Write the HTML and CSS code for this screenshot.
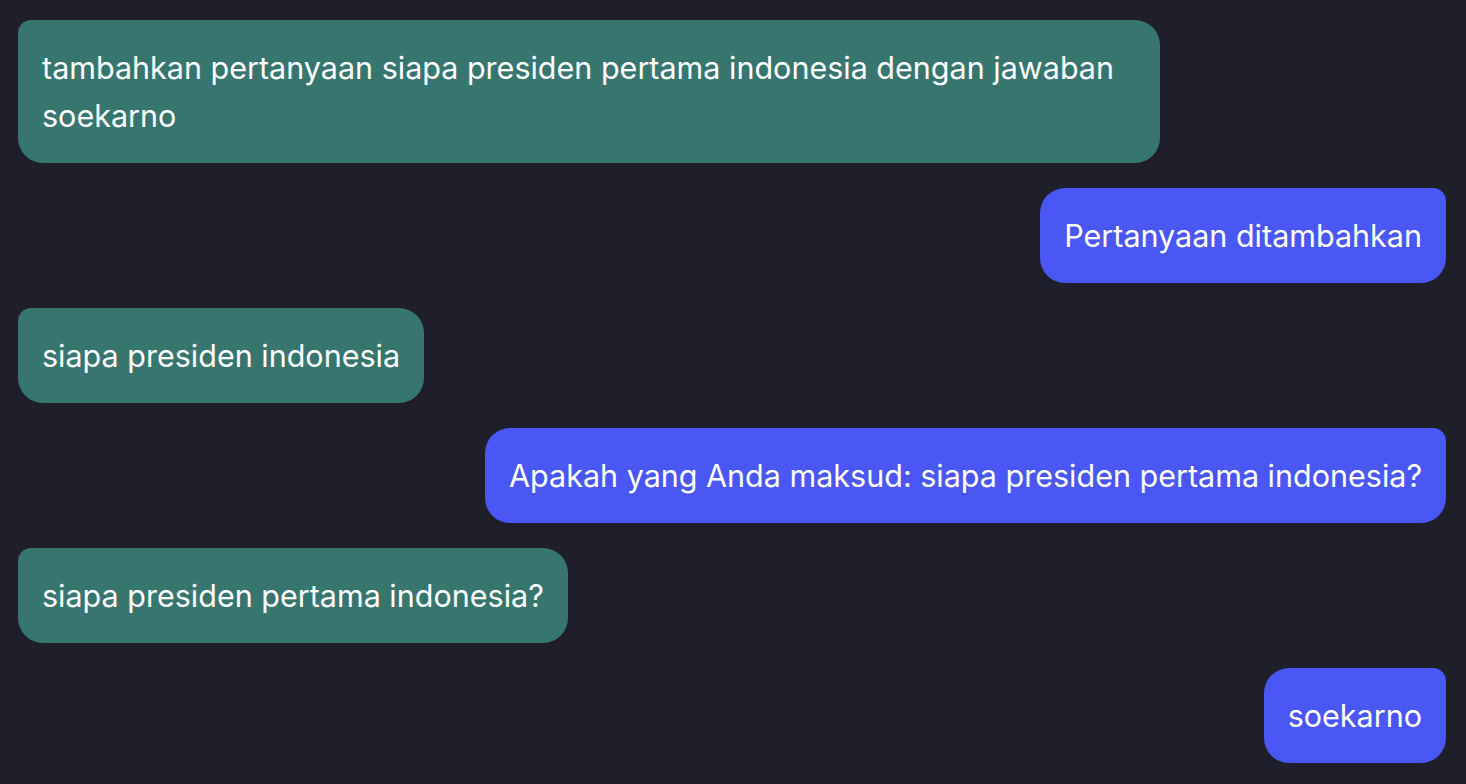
FILE: index.html
```html
<!DOCTYPE html>
<html lang="id">
<head>
<meta charset="utf-8">
<title>Chat</title>
<link rel="stylesheet" href="styles.css">
</head>
<body>
<main class="chat">
  <div class="msg msg-user">tambahkan pertanyaan siapa presiden pertama indonesia dengan jawaban soekarno</div>
  <div class="msg msg-bot">Pertanyaan ditambahkan</div>
  <div class="msg msg-user">siapa presiden indonesia</div>
  <div class="msg msg-bot">Apakah yang Anda maksud: siapa presiden pertama indonesia?</div>
  <div class="msg msg-user">siapa presiden pertama indonesia?</div>
  <div class="msg msg-bot">soekarno</div>
</main>
</body>
</html>
```
FILE: styles.css
```css
html, body {
  margin: 0;
  padding: 0;
  background: #1f1f2b;
  height: 100%;
}
body {
  font-family: Inter, "Liberation Sans", sans-serif;
  color: #ffffff;
}
.chat {
  display: flex;
  flex-direction: column;
  gap: 25px;
  padding: 20px 20px 0 18px;
}
.msg {
  max-width: 80%;
  font-size: 30.5px;
  line-height: 48px;
  padding: 24px 24px 23px;
  box-sizing: border-box;
}
.msg-user {
  align-self: flex-start;
  background: #37756f;
  border-radius: 13px 25px 25px 25px;
}
.msg-bot {
  align-self: flex-end;
  background: #4a57f5;
  border-radius: 25px 13px 25px 25px;
}
```
